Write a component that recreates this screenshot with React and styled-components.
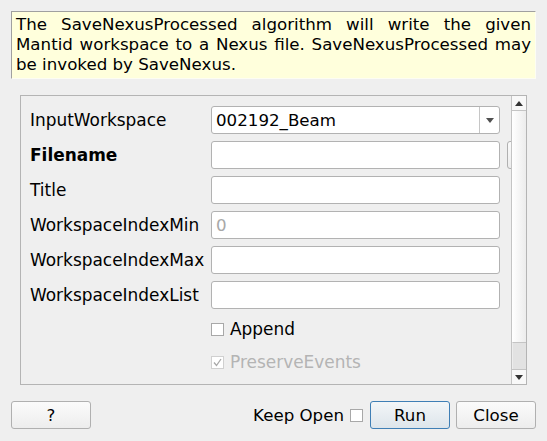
import styled, { createGlobalStyle } from "styled-components";

const fields = [
  { id: 0, label: "InputWorkspace", kind: "combo", value: "002192_Beam" },
  { id: 1, label: "Filename", kind: "file", bold: true },
  { id: 2, label: "Title", kind: "text" },
  { id: 3, label: "WorkspaceIndexMin", kind: "text", placeholder: "0" },
  { id: 4, label: "WorkspaceIndexMax", kind: "text" },
  { id: 5, label: "WorkspaceIndexList", kind: "text" },
];

const GlobalStyle = createGlobalStyle`
  html, body {
    margin: 0;
    padding: 0;
    background: #efefef;
  }
  body {
    font-family: "DejaVu Sans", "Liberation Sans", sans-serif;
    font-size: 16.67px;
    color: #000;
  }
  * { box-sizing: border-box; }
`;

const Dialog = styled.div`
  width: 547px;
  height: 441px;
  padding: 11px;
  display: flex;
  flex-direction: column;
  overflow: hidden;
`;

const Description = styled.div`
  background: #ffffdc;
  border-top: 1px solid #a0a0a0;
  border-left: 1px solid #a0a0a0;
  border-right: 1px solid #fdfdf3;
  border-bottom: 1px solid #fdfdf3;
  padding: 3px 4px 4px 4px;
  line-height: 20px;
  text-align: justify;
  height: 68px;
`;

const Frame = styled.div`
  margin: 16px 9px 0 9px;
  height: 290px;
  border: 1px solid #b4b4b4;
  display: flex;
`;

const Viewport = styled.div`
  flex: 1;
  overflow: hidden;
  position: relative;
`;

const FormGrid = styled.div`
  display: grid;
  grid-template-columns: 175px 289px 80px;
  column-gap: 6px;
  row-gap: 7px;
  padding: 10px 0 0 9px;
  width: 600px;
  align-items: center;
`;

const Label = styled.div`
  grid-column: 1;
  font-size: 16.95px;
  font-weight: ${({ $bold }) => ($bold ? 700 : 400)};
  white-space: nowrap;
`;

const LineEdit = styled.div`
  grid-column: 2;
  height: 28px;
  background: #fff;
  border: 1px solid #b2b2b2;
  border-radius: 3px;
  padding: 0 4px;
  display: flex;
  align-items: center;
  color: ${({ $placeholder }) => ($placeholder ? "#a8a8a8" : "#000")};
`;

const Combo = styled.div`
  grid-column: 2;
  height: 28px;
  background: #fff;
  border: 1px solid #b2b2b2;
  border-radius: 3px;
  display: flex;
  align-items: stretch;
`;

const ComboText = styled.div`
  flex: 1;
  padding: 0 4px;
  display: flex;
  align-items: center;
`;

const ComboArrow = styled.div`
  width: 20px;
  border-left: 1px solid #c6c6c6;
  display: flex;
  align-items: center;
  justify-content: center;
`;

const BrowseButton = styled.div`
  grid-column: 3;
  margin-left: 1px;
  height: 28px;
  border: 1px solid #b0b0b0;
  border-radius: 3px;
  background: linear-gradient(#fafafa, #ececec);
`;

const CheckRow = styled.div`
  grid-column: 2;
  height: 26px;
  display: flex;
  align-items: center;
  gap: 6px;
  font-size: 16.95px;
  color: ${({ $disabled }) => ($disabled ? "#b4b4b4" : "#000")};
`;

const Box = styled.div`
  width: 13px;
  height: 13px;
  flex: none;
  background: #fff;
  border: 1px solid ${({ $disabled }) => ($disabled ? "#d0d0d0" : "#a8a8a8")};
  display: flex;
  align-items: center;
  justify-content: center;
`;

const ScrollBar = styled.div`
  width: 15px;
  border-left: 1px solid #c4c4c4;
  display: flex;
  flex-direction: column;
  background: #f4f4f4;
`;

const ScrollButton = styled.div`
  height: 15px;
  flex: none;
  display: flex;
  align-items: center;
  justify-content: center;
  background: #f8f8f8;
  border-${({ $side }) => $side}: 1px solid #c4c4c4;
`;

const Handle = styled.div`
  flex: 1;
  background: linear-gradient(to right, #ffffff, #ececec);
`;

const Groove = styled.div`
  height: 27px;
  flex: none;
  background: #e2e2e2;
  border-top: 1px solid #c4c4c4;
  border-left: 1px solid #ededed;
`;

const ButtonBar = styled.div`
  margin-top: 16px;
  display: flex;
  align-items: center;
`;

const PushButton = styled.div`
  width: 80px;
  height: 28px;
  border: 1px solid ${({ $default }) => ($default ? "#3f7fb5" : "#b0b0b0")};
  border-radius: 3px;
  background: ${({ $default }) =>
    $default ? "linear-gradient(#f3f6f8, #dde5eb)" : "linear-gradient(#fbfbfb, #ededed)"};
  display: flex;
  align-items: center;
  justify-content: center;
  margin-left: ${({ $gap }) => $gap || 0}px;
`;

const Spacer = styled.div`
  flex: 1;
`;

const KeepOpen = styled.div`
  display: flex;
  align-items: center;
  gap: 6px;
`;

const Triangle = ({ up, color = "#505050" }) => (
  <svg width="8" height="5" viewBox="0 0 8 5">
    <polygon points={up ? "0,5 8,5 4,0" : "0,0 8,0 4,5"} fill={color} />
  </svg>
);

const Check = () => (
  <svg width="9" height="9" viewBox="0 0 9 9">
    <polyline points="1,4.5 3.5,7.5 8,1" fill="none" stroke="#a8a8a8" strokeWidth="1.3" />
  </svg>
);

export default function App() {
  return (
    <>
      <GlobalStyle />
      <Dialog>
        <Description>
          The SaveNexusProcessed algorithm will write the given Mantid workspace to a Nexus file.
          SaveNexusProcessed may be invoked by SaveNexus.
        </Description>
        <Frame>
          <Viewport>
            <FormGrid>
              {fields.map((f) => (
                <FieldRow key={f.id} field={f} />
              ))}
              <CheckRow>
                <Box />
                Append
              </CheckRow>
              <CheckRow $disabled>
                <Box $disabled>
                  <Check />
                </Box>
                PreserveEvents
              </CheckRow>
            </FormGrid>
          </Viewport>
          <ScrollBar>
            <ScrollButton $side="bottom">
              <Triangle up color="#333" />
            </ScrollButton>
            <Handle />
            <Groove />
            <ScrollButton $side="top">
              <Triangle color="#333" />
            </ScrollButton>
          </ScrollBar>
        </Frame>
        <ButtonBar>
          <PushButton>?</PushButton>
          <Spacer />
          <KeepOpen>
            Keep Open
            <Box />
          </KeepOpen>
          <PushButton $default $gap={7}>
            Run
          </PushButton>
          <PushButton $gap={6}>Close</PushButton>
        </ButtonBar>
      </Dialog>
    </>
  );
}

function FieldRow({ field }) {
  return (
    <>
      <Label $bold={field.bold}>{field.label}</Label>
      {field.kind === "combo" && (
        <Combo>
          <ComboText>{field.value}</ComboText>
          <ComboArrow>
            <Triangle />
          </ComboArrow>
        </Combo>
      )}
      {field.kind === "file" && (
        <>
          <LineEdit />
          <BrowseButton />
        </>
      )}
      {field.kind === "text" && (
        <LineEdit $placeholder={!!field.placeholder}>{field.placeholder}</LineEdit>
      )}
    </>
  );
}
